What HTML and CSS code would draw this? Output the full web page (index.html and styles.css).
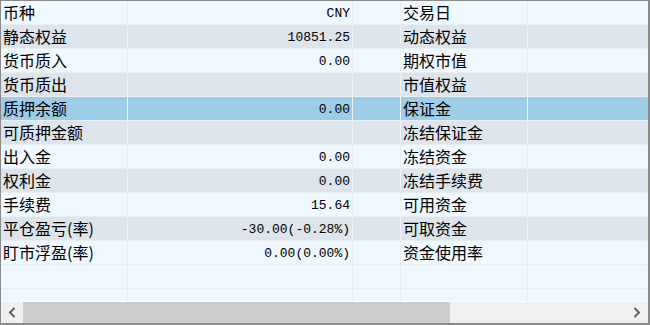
FILE: index.html
```html
<!DOCTYPE html>
<html lang="zh-CN">
<head>
<meta charset="utf-8">
<title>资金</title>
<link rel="stylesheet" href="styles.css">
</head>
<body>
<div class="frame">
  <div class="rows">
    <div class="row"><div class="cell lbl">币种</div><div class="cell num">CNY</div><div class="cell"></div><div class="cell lbl">交易日</div><div class="cell last"></div></div>
    <div class="row alt"><div class="cell lbl">静态权益</div><div class="cell num">10851.25</div><div class="cell"></div><div class="cell lbl">动态权益</div><div class="cell last"></div></div>
    <div class="row"><div class="cell lbl">货币质入</div><div class="cell num">0.00</div><div class="cell"></div><div class="cell lbl">期权市值</div><div class="cell last"></div></div>
    <div class="row alt"><div class="cell lbl">货币质出</div><div class="cell num"></div><div class="cell"></div><div class="cell lbl">市值权益</div><div class="cell last"></div></div>
    <div class="row sel"><div class="cell lbl">质押余额</div><div class="cell num">0.00</div><div class="cell"></div><div class="cell lbl">保证金</div><div class="cell last"></div></div>
    <div class="row alt"><div class="cell lbl">可质押金额</div><div class="cell num"></div><div class="cell"></div><div class="cell lbl">冻结保证金</div><div class="cell last"></div></div>
    <div class="row"><div class="cell lbl">出入金</div><div class="cell num">0.00</div><div class="cell"></div><div class="cell lbl">冻结资金</div><div class="cell last"></div></div>
    <div class="row alt"><div class="cell lbl">权利金</div><div class="cell num">0.00</div><div class="cell"></div><div class="cell lbl">冻结手续费</div><div class="cell last"></div></div>
    <div class="row"><div class="cell lbl">手续费</div><div class="cell num">15.64</div><div class="cell"></div><div class="cell lbl">可用资金</div><div class="cell last"></div></div>
    <div class="row alt"><div class="cell lbl">平仓盈亏(率)</div><div class="cell num">-30.00(-0.28%)</div><div class="cell"></div><div class="cell lbl">可取资金</div><div class="cell last"></div></div>
    <div class="row"><div class="cell lbl">盯市浮盈(率)</div><div class="cell num">0.00(0.00%)</div><div class="cell"></div><div class="cell lbl">资金使用率</div><div class="cell last"></div></div>
    <div class="row"><div class="cell lbl"></div><div class="cell num"></div><div class="cell"></div><div class="cell lbl"></div><div class="cell last"></div></div>
    <div class="row"><div class="cell lbl"></div><div class="cell num"></div><div class="cell"></div><div class="cell lbl"></div><div class="cell last"></div></div>
  </div>
  <div class="hscroll">
    <div class="sbtn"><svg width="8" height="11" viewBox="0 0 8 11"><polyline points="6.5,1 2,5.5 6.5,10" fill="none" stroke="#606060" stroke-width="2"/></svg></div>
    <div class="track"><div class="thumb"></div></div>
    <div class="sbtn"><svg width="8" height="11" viewBox="0 0 8 11"><polyline points="1.5,1 6,5.5 1.5,10" fill="none" stroke="#606060" stroke-width="2"/></svg></div>
  </div>
</div>
</body>
</html>
```
FILE: styles.css
```css
html, body {
  margin: 0;
  padding: 0;
  background: #ffffff;
}

.frame {
  width: 650px;
  height: 325px;
  box-sizing: border-box;
  border-top: 1px solid #8a8a8a;
  border-left: 1px solid #8a8a8a;
  border-right: 2px solid #8a8a8a;
  border-bottom: 2px solid #8a8a8a;
  display: flex;
  flex-direction: column;
  background: #eff7ff;
  overflow: hidden;
}

.rows {
  height: 300px;
  overflow: hidden;
  border-bottom: 1px solid #ffffff;
  flex: none;
}

.row {
  display: grid;
  grid-template-columns: 127px 225px 48px 127px 1fr;
  height: 24px;
  box-sizing: border-box;
  border-bottom: 1px solid #e9eef3;
  background: #eff7ff;
}

.row.alt {
  background: #dee4eb;
}

.row.sel {
  background: #9dcde7;
}

.cell {
  box-sizing: border-box;
  border-right: 1px solid #e9eef3;
  font-family: "Noto Sans CJK SC", "Noto Sans", sans-serif;
  font-size: 16px;
  line-height: 22px;
  color: #000;
  white-space: nowrap;
}

.row.alt .cell, .row.sel .cell {
  border-right-color: #eef2f6;
}

.cell.last {
  border-right: none;
}

.lbl {
  padding-left: 2px;
}

.num {
  font-family: "Liberation Mono", "DejaVu Sans Mono", monospace;
  font-size: 13px;
  line-height: 18px;
  text-align: right;
  padding-right: 2px;
  padding-top: 4px;
}

.hscroll {
  flex: 1;
  display: flex;
  background: #f0f0f0;
}

.sbtn {
  width: 22px;
  flex: none;
  display: flex;
  align-items: center;
  justify-content: center;
}

.track {
  flex: 1;
  display: flex;
}

.thumb {
  width: 427px;
  background: #cdcdcd;
}
```
